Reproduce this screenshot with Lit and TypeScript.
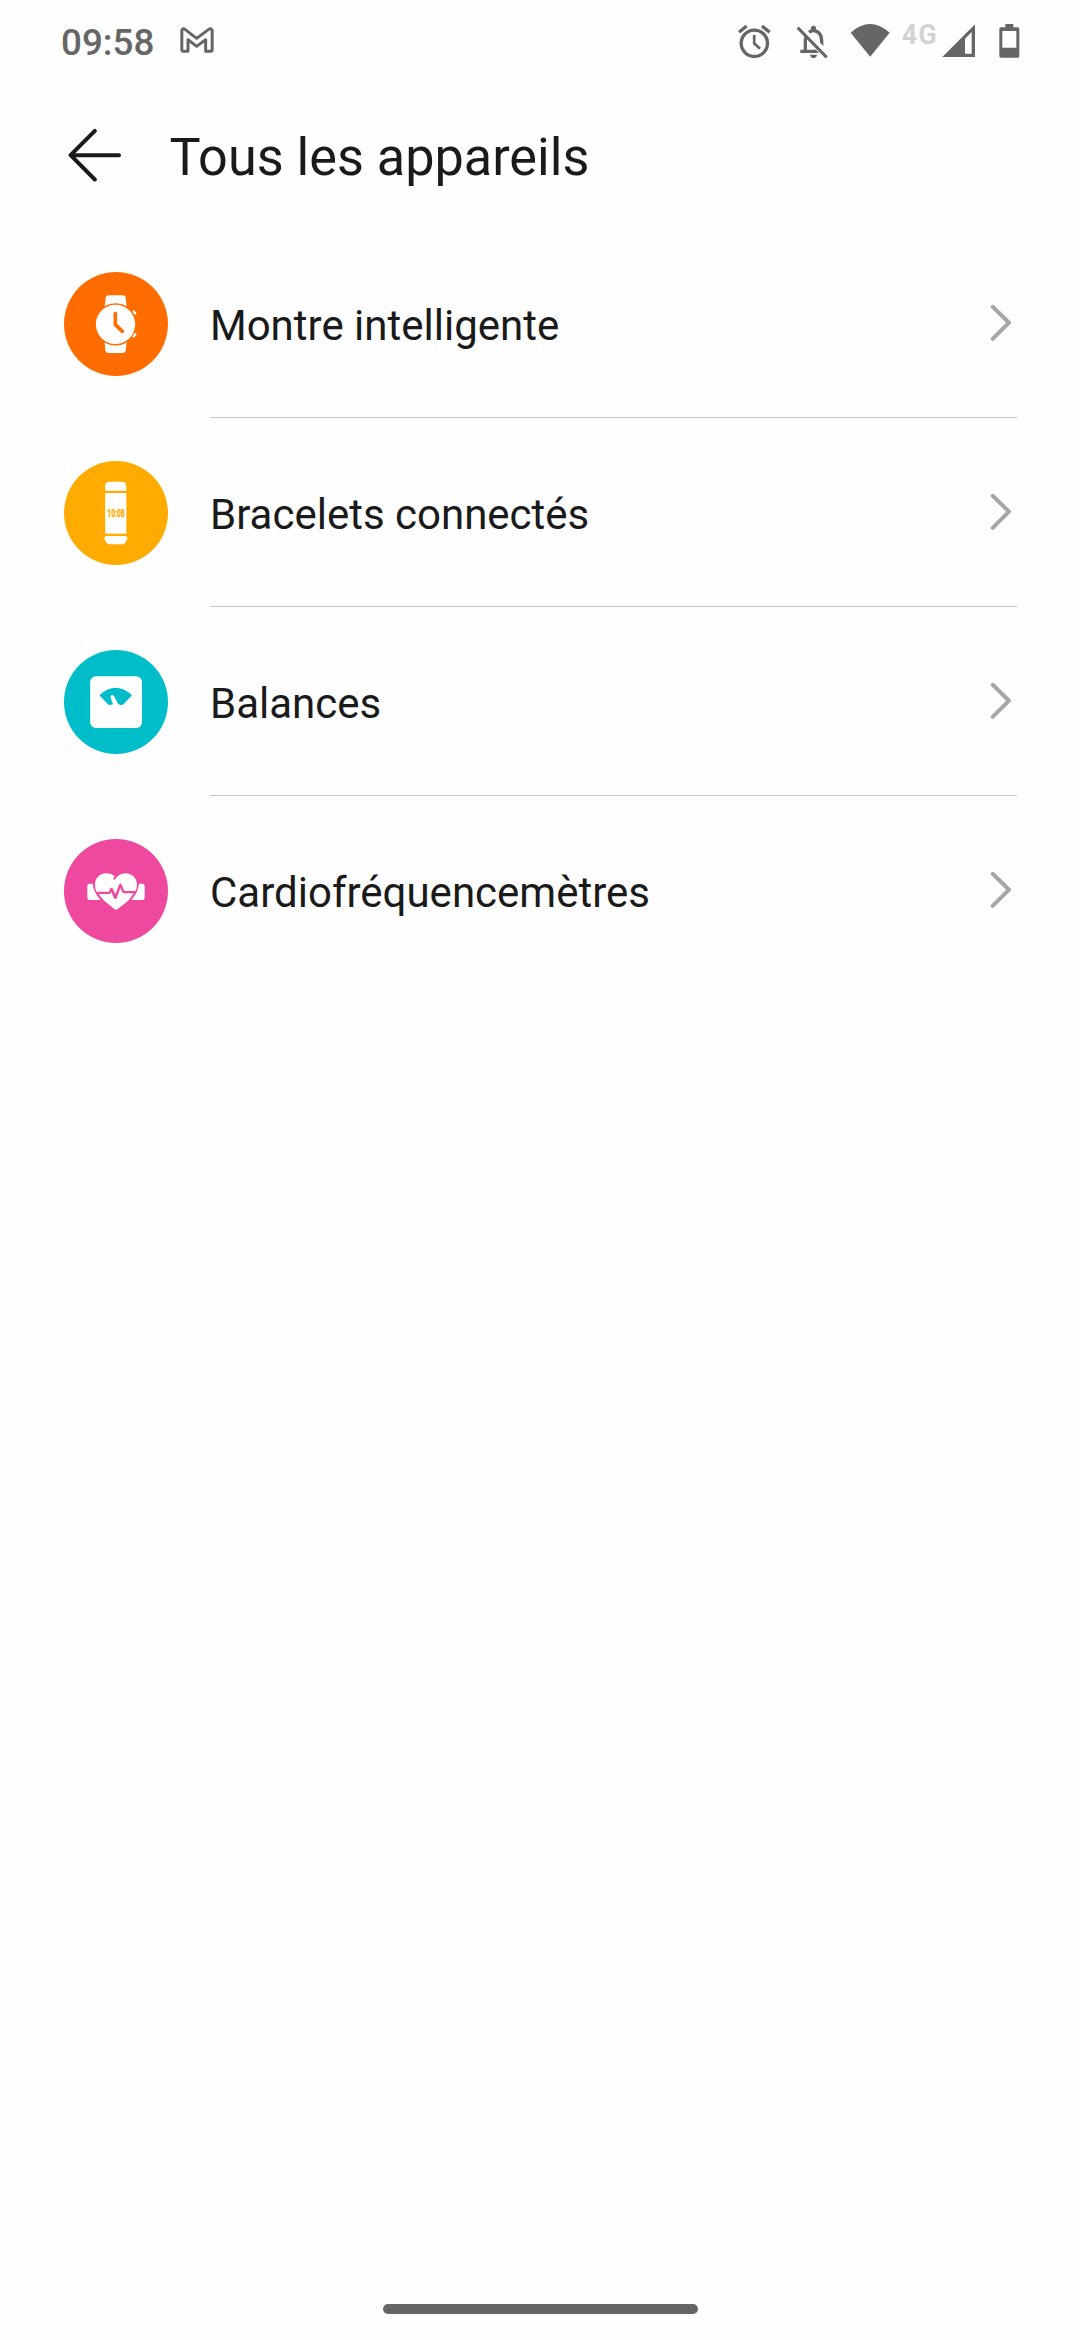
import { LitElement, html, css, svg, type TemplateResult } from "lit";
import { customElement, property } from "lit/decorators.js";

interface Category {
  label: string;
  icon: TemplateResult;
}

const watchIcon = html`<svg viewBox="29 28 312 312" width="104" height="104">
  <circle cx="185" cy="184" r="156" fill="#ff6d00" />
  <path d="M151 131 L154 106 Q155 98 163 98 H205 Q213 98 214 106 L217 131 Z" fill="#fff" />
  <path d="M151 238 L153 263 Q154 271 163 271 H205 Q213 271 214 263 L217 238 Z" fill="#fff" />
  <circle cx="184" cy="185" r="63.500" fill="#ff6d00" />
  <circle cx="183.500" cy="185" r="59" fill="#fff" />
  <path d="M183 153 V186 L204 206" fill="none" stroke="#ff6d00" stroke-width="11" stroke-linecap="round" stroke-linejoin="round" />
  <path d="M238.500 147 L242.500 152 M242.500 215 L238 220.500" stroke="#fff" stroke-width="7.500" stroke-linecap="round" />
</svg>`;

const bandIcon = html`<svg viewBox="29 31 312 312" width="104" height="104">
  <circle cx="185" cy="187" r="156" fill="#ffab00" />
  <path d="M152.500 120 V106 Q153 93 166 93 H202 Q215 93 216 106 V120 Z" fill="#fff" />
  <rect x="152.500" y="127" width="63.500" height="122" fill="#fff" />
  <path d="M153 256 H216 L220 264 L216 269 Q213 281 203 281 H166 Q156 281 153 269 L149 264 Z" fill="#fff" />
  <text x="159" y="199" font-family="Roboto, sans-serif" font-weight="700" font-size="31" textLength="52" lengthAdjust="spacingAndGlyphs" fill="#ffab00" stroke="#ffab00" stroke-width="1">10:08</text>
</svg>`;

const scaleIcon = html`<svg viewBox="29 28 312 312" width="104" height="104">
  <circle cx="185" cy="184" r="156" fill="#00bdca" />
  <rect x="107.500" y="107" width="155.500" height="155" rx="17" fill="#fff" />
  <path d="M137 162 Q184 120 231.500 162 Q233.500 164 231.500 166 L207 191 Q205 194 201 193 L192 191 L179 166 Q175 161 171 164 Q168 167 169 171 L176 191 L167 193 Q164 194 161 191 L137 166 Q135 164 137 162 Z" fill="#00bdca" />
</svg>`;

const heartIcon = html`<svg viewBox="29 31 312 312" width="104" height="104">
  <circle cx="185" cy="187" r="156" fill="#ef489f" />
  <path d="M115 165 H105 Q99 165 99 171 V207 Q99 214 106 214 H139 Q118 192 115 165 Z" fill="#fff" />
  <path d="M254 165 H265 Q271 165 271 171 V207 Q271 214 264 214 H231 Q251 192 254 165 Z" fill="#fff" />
  <path d="M126 189 Q122 181 122 169 C122 146 138 134 157 134 Q172 134 181 142 L176 151 L181 153 Q195 134 213 134 C234 134 248 149 248 169 Q248 181 243 187 H210 L202 168 Q198 161 194 168 L183 197 L176 181 Q171 173 167 181 L164 189 Z" fill="#fff" />
  <path d="M133 196 H164 Q169 196 171 190 L179 209 Q183 214 187 209 L198 178 L204 190 Q206 194 211 194 H238 Q229 210 217 220 L190 241 Q185 245 180 241 L154 220 Q141 209 133 196 Z" fill="#fff" />
</svg>`;

const categories: Category[] = [
  { label: "Montre intelligente", icon: watchIcon },
  { label: "Bracelets connectés", icon: bandIcon },
  { label: "Balances", icon: scaleIcon },
  { label: "Cardiofréquencemètres", icon: heartIcon },
];

@customElement("status-bar")
class StatusBar extends LitElement {
  static styles = css`
    :host {
      display: flex;
      justify-content: space-between;
      height: 80px;
      padding: 0 60.33px 0 61px;
      box-sizing: border-box;
      color: #666;
      font-family: Roboto, sans-serif;
    }
    svg {
      display: block;
    }
    .left,
    .right {
      display: flex;
      align-items: flex-start;
    }
    .time {
      font-size: 36.8px;
      font-weight: 500;
      line-height: 44px;
      margin-top: 21px;
      width: 119px;
      white-space: nowrap;
    }
    .mail {
      margin-top: 27px;
    }
    .alarm {
      margin: 24px 25px 0 0;
    }
    .bell {
      margin: 24px 20.33px 0 0;
    }
    .wifi {
      margin: 23px 10.67px 0 0;
    }
    .network {
      width: 41px;
      box-sizing: border-box;
      padding-left: 0.8px;
      margin-top: 18.5px;
      font-size: 27px;
      font-weight: 700;
      line-height: 32px;
      letter-spacing: 1px;
      color: #d2d2d2;
      white-space: nowrap;
    }
    .signal {
      margin: 24px 23.67px 0 0;
    }
    .battery {
      margin-top: 23px;
    }
  `;

  render() {
    return html`
      <div class="left">
        <span class="time">09:58</span>
        <svg class="mail" viewBox="420 81 102 78" width="34" height="26">
          <path d="M425.500 151 V91 Q427 84 435 88 L470 115 L506 88 Q514 84 516.500 91 V151 Q516 154 513 154 H497 V119 L470 139 L444 119 V154 H429 Q426 154 425.500 151 Z" fill="none" stroke="#666" stroke-width="9" stroke-linejoin="round" />
        </svg>
      </div>
      <div class="right">
        <svg class="alarm" viewBox="54 72 99 105" width="33" height="35">
          <circle cx="103" cy="130" r="39.500" fill="none" stroke="#666" stroke-width="10" />
          <path d="M102.500 105 V130 L120 146" fill="none" stroke="#666" stroke-width="8" />
          <path d="M57 97 L80 78 M126 78 L149 97" stroke="#666" stroke-width="10" />
        </svg>
        <svg class="bell" viewBox="228 72 102 105" width="34" height="35">
          <path d="M233 83 L320 172" stroke="#666" stroke-width="9" />
          <path d="M241 149 H288 L297 159 H241 Z" fill="#666" />
          <path d="M256 151 V123 Q256 113 260 107" fill="none" stroke="#666" stroke-width="10" />
          <path d="M264 94 Q268 90 273 88 V84 Q273 77 280 77 Q288 77 288 84 V88 Q309 95 310 121 V138 L300 128 V122 Q299 98 280 97 Q275 97 271 101 Z" fill="#666" />
          <path d="M270 164 H291 Q289 174 280 174 Q272 174 270 164 Z" fill="#666" />
        </svg>
        <svg class="wifi" viewBox="391 69 120 102" width="40" height="34">
          <path d="M393 98 Q451 46 510 98 L451.500 170 Z" fill="#666" />
        </svg>
        <span class="network">4G</span>
        <svg class="signal" viewBox="186 72 99 99" width="33" height="33">
          <path d="M187 171 L285 73 V171 Z M255 116 V161 H275 V96 Z" fill="#666" fill-rule="evenodd" />
        </svg>
        <svg class="battery" viewBox="356 69 63 105" width="21" height="35">
          <path d="M375 72 H399 V82 H412 Q417 82 417 87 V168 Q417 173 412 173 H362 Q357 173 357 168 V87 Q357 82 362 82 H375 Z M366 93 V143 H408 V93 Z" fill="#666" fill-rule="evenodd" />
        </svg>
      </div>
    `;
  }
}

@customElement("device-row")
class DeviceRow extends LitElement {
  @property({ attribute: false }) category!: Category;

  static styles = css`
    :host {
      display: flex;
      align-items: center;
      height: 189px;
      padding: 0 63px 0 64px;
      box-sizing: border-box;
      font-family: Roboto, sans-serif;
    }
    svg {
      display: block;
    }
    .icon {
      margin-right: 42px;
    }
    .body {
      flex: 1;
      display: flex;
      align-items: center;
      justify-content: space-between;
      height: 189px;
      box-sizing: border-box;
      padding-right: 5px;
      border-bottom: 1px solid #c8c8c8;
    }
    :host([last]) .body {
      border-bottom-color: transparent;
    }
    .label {
      padding-top: 6px;
      font-size: 42px;
      line-height: 50px;
      color: #1a1a1a;
      white-space: nowrap;
    }
  `;

  render() {
    return html`
      <div class="icon">${this.category.icon}</div>
      <div class="body">
        <span class="label">${this.category.label}</span>
        <svg class="chevron" viewBox="0 0 22 38" width="22" height="38">
          ${svg`<path d="M2.700 2.800 L19 18.700 L2.700 34.800" fill="none" stroke="#a6a6a6" stroke-width="4" stroke-linecap="round" stroke-linejoin="round" />`}
        </svg>
      </div>
    `;
  }
}

@customElement("app-root")
class AppRoot extends LitElement {
  static styles = css`
    :host {
      display: flex;
      flex-direction: column;
      width: 1080px;
      height: 2340px;
      overflow: hidden;
      background: #fefefe;
      font-family: Roboto, sans-serif;
    }
    .header {
      display: flex;
      align-items: center;
      height: 149px;
      padding: 0 68px;
      box-sizing: border-box;
    }
    .back {
      display: block;
      margin-right: 47.5px;
    }
    .title {
      margin: 6px 0 0;
      font-size: 52.2px;
      line-height: 64px;
      font-weight: 400;
      color: #1a1a1a;
      white-space: nowrap;
    }
    .list {
      flex: 1;
    }
    .nav {
      display: flex;
      justify-content: center;
      padding-bottom: 26px;
    }
    .pill {
      width: 315px;
      height: 10px;
      border-radius: 5px;
      background: #666;
    }
  `;

  render() {
    return html`
      <status-bar></status-bar>
      <header class="header">
        <svg class="back" viewBox="0 0 54 58" width="54" height="58">
          <path d="M26.800 4.800 L2.600 29.200 L26.800 53.500 M2.600 29.200 H51" fill="none" stroke="#1a1a1a" stroke-width="4" stroke-linecap="round" stroke-linejoin="round" />
        </svg>
        <h1 class="title">Tous les appareils</h1>
      </header>
      <main class="list">
        ${categories.map(
          (c, i) => html`<device-row .category=${c} ?last=${i === categories.length - 1}></device-row>`,
        )}
      </main>
      <div class="nav"><div class="pill"></div></div>
    `;
  }
}
